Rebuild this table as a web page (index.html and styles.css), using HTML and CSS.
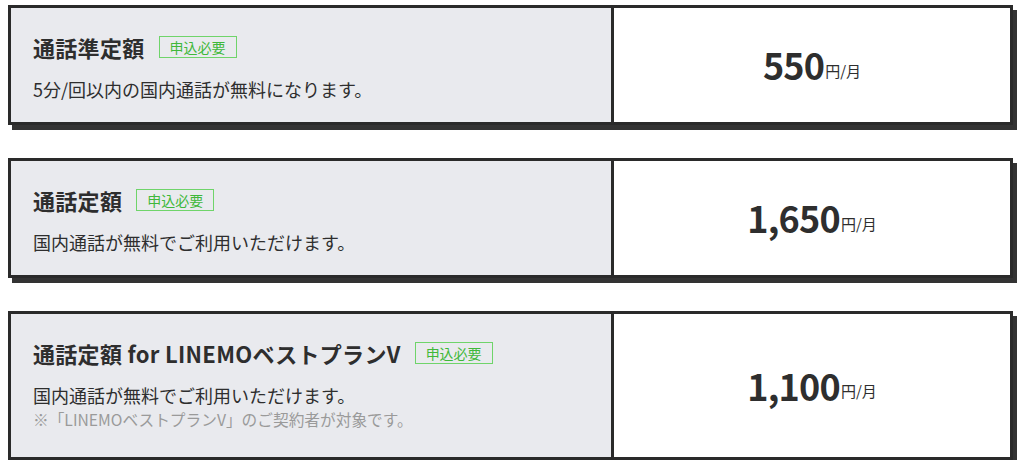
FILE: index.html
```html
<!DOCTYPE html>
<html lang="ja">
<head>
<meta charset="utf-8">
<link rel="stylesheet" href="styles.css">
</head>
<body>
<div class="list">
  <div class="card">
    <div class="info">
      <div class="title-row"><span class="title">通話準定額</span><span class="badge">申込必要</span></div>
      <p class="desc">5分/回以内の国内通話が無料になります。</p>
    </div>
    <div class="price"><span class="num">550</span><span class="unit">円/月</span></div>
  </div>
  <div class="card">
    <div class="info">
      <div class="title-row"><span class="title">通話定額</span><span class="badge">申込必要</span></div>
      <p class="desc">国内通話が無料でご利用いただけます。</p>
    </div>
    <div class="price"><span class="num">1,650</span><span class="unit">円/月</span></div>
  </div>
  <div class="card">
    <div class="info">
      <div class="title-row"><span class="title">通話定額 for LINEMOベストプランV</span><span class="badge">申込必要</span></div>
      <p class="desc">国内通話が無料でご利用いただけます。</p>
      <p class="note">※「LINEMOベストプランV」のご契約者が対象です。</p>
    </div>
    <div class="price"><span class="num">1,100</span><span class="unit">円/月</span></div>
  </div>
</div>
</body>
</html>
```

FILE: styles.css
```css
* { box-sizing: border-box; }
html, body { margin: 0; padding: 0; background: #fff; }
body {
  font-family: "Noto Sans CJK JP", "Noto Sans", sans-serif;
  color: #2e2e2e;
}
.list {
  display: flex;
  flex-direction: column;
  gap: 33px;
  padding: 5px 0 0 8px;
  width: 1013px;
}
.card {
  display: flex;
  border: 3px solid #2a2a2a;
  box-shadow: 4px 5px 0 #333;
}
.info {
  width: 603px;
  background: #e9eaee;
  border-right: 3px solid #2a2a2a;
  padding: 24px 22px 20px;
  display: flex;
  flex-direction: column;
}
.title-row {
  display: flex;
  align-items: center;
  gap: 14px;
  height: 30px;
}
.title {
  font-size: 22px;
  font-weight: 700;
  letter-spacing: 0.3px;
}
.badge {
  border: 1.5px solid #6fd46a;
  color: #3fb83a;
  font-size: 14px;
  line-height: 20px;
  padding: 0 10px;
}
.desc {
  margin: 14px 0 0;
  font-size: 18px;
  line-height: 26px;
}
.note {
  margin: 0 0 5px;
  font-size: 15.7px;
  line-height: 24px;
  color: #9a9a9a;
}
.price {
  flex: 1;
  background: #fff;
  display: flex;
  align-items: center;
  justify-content: center;
  padding-bottom: 2px;
}
.num {
  font-size: 36px;
  font-weight: 700;
  letter-spacing: -0.8px;
  line-height: 1;
}
.unit {
  font-size: 15px;
  margin-top: 12px;
  margin-left: 1px;
}
```
